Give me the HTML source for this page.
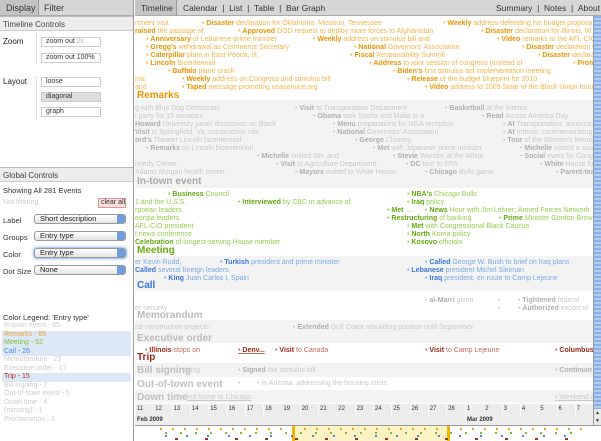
<!DOCTYPE html>
<html><head><meta charset="utf-8"><style>
*{margin:0;padding:0;box-sizing:border-box}
body{width:601px;height:441px;overflow:hidden;background:#fff;font-family:"Liberation Sans",sans-serif;position:relative}
.a{position:absolute;white-space:nowrap}
#left{position:absolute;left:0;top:0;width:134px;height:441px;background:#fff;border-right:1px solid #999}
.tabs{position:absolute;left:0;top:0;height:16px;width:100%;background:#d6d6d6;border-bottom:1px solid #aaa;font-size:9px;color:#333}
.hdr{position:absolute;left:0;width:133px;height:15px;background:#ececec;border-top:1px solid #bbb;border-bottom:1px solid #ccc;font-size:8px;color:#444;padding:3px 0 0 3px}
.btn{position:absolute;left:41px;width:60px;height:10px;border:1px solid #ccc;background:#fff;font-size:7px;color:#333;padding:0 0 0 4px;line-height:8px}
.sel{position:absolute;left:34px;width:92px;height:10px;border:1px solid #999;border-radius:3px;background:linear-gradient(#fff,#e4e4e4);font-size:7.5px;color:#222;padding-left:5px;line-height:8px}
.sel:after{content:"";position:absolute;right:0;top:0;width:8px;height:8px;background:#6f9ee0;border-radius:0 2px 2px 0}
.lg{position:absolute;left:2px;width:129px;height:8.5px;font-size:7px;color:#ccc;padding-left:2px;line-height:8.5px}
#main{position:absolute;left:135px;top:16px;width:458px;height:409px;overflow:hidden;font-size:7px;line-height:8px}
.band{position:absolute;left:0;width:458px}
.e{position:absolute;white-space:nowrap}
.o{color:#f3b44a}.o b{color:#ec9400}
.g{color:#c9c9c9}.g b{color:#b0b0b0}
.m{color:#94cc4f}.m b{color:#62a810}
.c{color:#7aaae6}.c b{color:#3a78d8}
.r{color:#c46a5e}.r b{color:#9a2818}
.l{position:absolute;left:2px;font-weight:bold;font-size:10px;line-height:11px}
.ax{position:absolute;top:388px;height:12px;width:17.5px;background:#ececec;font-size:6px;color:#333;padding:2px 0 0 1px;line-height:7px}
</style></head><body>
<div id="left">
 <div class="tabs"><span class="a" style="left:0;top:0;width:39px;height:15px;background:#c4c4c4;border-right:1px solid #999;padding:3px 0 0 6px">Display</span><span class="a" style="left:44px;top:3px">Filter</span></div>
 <div class="hdr" style="top:16px">Timeline Controls</div>
 <div class="a" style="left:3px;top:37px;font-size:8px;color:#222">Zoom</div>
 <div class="a" style="left:36px;top:35px;height:28px;border-left:1px dotted #bbb"></div>
 <div class="btn" style="top:37px">zoom out <span style="color:#aaa;font-size:6px">2X</span></div>
 <div class="btn" style="top:53px">zoom out 100%</div>
 <div class="a" style="left:3px;top:77px;font-size:8px;color:#222">Layout</div>
 <div class="a" style="left:36px;top:76px;height:43px;border-left:1px dotted #bbb"></div>
 <div class="btn" style="top:77px">loose</div>
 <div class="btn" style="top:92px;background:#ddd">diagonal</div>
 <div class="btn" style="top:107px">graph</div>
 <div class="hdr" style="top:167px">Global Controls</div>
 <div class="a" style="left:3px;top:186px;font-size:7.5px;color:#333">Showing All 281 Events</div>
 <div class="a" style="left:3px;top:199px;font-size:7px;color:#ccc">Not filtering</div>
 <div class="a" style="left:98px;top:198px;width:28px;height:10px;background:#f4dede;border:1px solid #d99;font-size:7px;color:#333;padding-left:2px;line-height:8px">clear all</div>
 <div class="a" style="left:3px;top:216px;font-size:7.5px;color:#333">Label</div><div class="sel" style="top:214px">Short description</div>
 <div class="a" style="left:3px;top:233px;font-size:7.5px;color:#333">Groups</div><div class="sel" style="top:231px">Entry type</div>
 <div class="a" style="left:3px;top:250px;font-size:7.5px;color:#333">Color</div><div class="sel" style="top:248px;box-shadow:0 0 2px 1px #8ab4f0">Entry type</div>
 <div class="a" style="left:3px;top:267px;font-size:7.5px;color:#333">Dot Size</div><div class="sel" style="top:265px">None</div>
 <div class="a" style="left:3px;top:313px;font-size:7.5px;color:#333">Color Legend: 'Entry type'</div>
 <div class="lg" style="top:322px">In-town event - 65</div>
 <div class="lg" style="top:330.5px;background:#dde8f7;color:#f0a030">Remarks - 65</div>
 <div class="lg" style="top:339px;background:#dde8f7;color:#7cc030">Meeting - 52</div>
 <div class="lg" style="top:347.5px;background:#dde8f7;color:#4a88e0">Call - 26</div>
 <div class="lg" style="top:356px">Memorandum - 23</div>
 <div class="lg" style="top:364.5px">Executive order - 17</div>
 <div class="lg" style="top:373px;background:#dde8f7;color:#a03020">Trip - 15</div>
 <div class="lg" style="top:381.5px">Bill signing - 7</div>
 <div class="lg" style="top:390px">Out-of-town event - 5</div>
 <div class="lg" style="top:398.5px">Down time - 4</div>
 <div class="lg" style="top:407px">(missing) - 1</div>
 <div class="lg" style="top:415.5px">Proclamation - 1</div>
</div>
<div class="a" style="left:135px;top:0;width:466px;height:16px;background:#d6d6d6;border-bottom:1px solid #aaa;font-size:8.5px;color:#333">
 <span class="a" style="left:0;top:0;width:42px;height:15px;background:#c4c4c4;border-right:1px solid #999;padding:3px 0 0 6px">Timeline</span>
 <span class="a" style="left:48px;top:3px">Calendar &nbsp;| &nbsp;List &nbsp;| &nbsp;Table &nbsp;| &nbsp;Bar Graph</span>
 <span class="a" style="left:361px;top:3px">Summary &nbsp;| &nbsp;Notes &nbsp;| &nbsp;About</span>
</div>
<div id="main">
 <div class="band" style="top:84px;height:88px;background:#f3f3f3"></div>
 <div class="band" style="top:240px;height:35px;background:#f3f3f3"></div>
 <div class="band" style="top:304px;height:23px;background:#f3f3f3"></div>
 <div class="band" style="top:347px;height:14px;background:#f3f3f3"></div>
 <div class="band" style="top:374px;height:14px;background:#f3f3f3"></div>
 <!-- remarks -->
 <div class="o">
 <span class="e" style="left:0;top:4px">rtment visit</span><span class="e" style="left:67px;top:4px">• <b>Disaster</b> declaration for Oklahoma, Missouri, Tennessee</span><span class="e" style="left:308px;top:4px">• <b>Weekly</b> address defending his budget proposal</span>
 <span class="e" style="left:0;top:12px"><b>raised</b> the passage of</span><span class="e" style="left:103px;top:12px">• <b>Approved</b> DOD request to deploy more forces to Afghanistan</span><span class="e" style="left:346px;top:12px">• <b>Disaster</b> declaration for Illinois, W</span>
 <span class="e" style="left:11px;top:20px">• <b>Anniversary</b> of Lebanese prime minister</span><span class="e" style="left:178px;top:20px">• <b>Weekly</b> address on stimulus bill and</span><span class="e" style="left:362px;top:20px">• <b>Video</b> remarks to the AFL-CIO</span>
 <span class="e" style="left:11px;top:28px">• <b>Gregg's</b> withdrawal as Commerce Secretary</span><span class="e" style="left:219px;top:28px">• <b>National</b> Governors' Association</span><span class="e" style="left:387px;top:28px">• <b>Disaster</b> declaration fo</span>
 <span class="e" style="left:11px;top:36px">• <b>Caterpillar</b> plant in East Peoria, Ill.</span><span class="e" style="left:215px;top:36px">• <b>Fiscal</b> Responsibility Summit</span><span class="e" style="left:403px;top:36px">• <b>Disaster</b> declara</span>
 <span class="e" style="left:11px;top:44px">• <b>Lincoln</b> Bicentennial</span><span class="e" style="left:234px;top:44px">• <b>Address</b> to joint session of congress (instead of</span><span class="e" style="left:438px;top:44px">• <b>Prom</b></span>
 <span class="e" style="left:33px;top:52px">• <b>Buffalo</b> plane crash</span><span class="e" style="left:258px;top:52px">• <b>Biden's</b> first stimulus act implementation meeting</span>
 <span class="e" style="left:0;top:60px">mic</span><span class="e" style="left:47px;top:60px">• <b>Weekly</b> address on Congress and stimulus bill</span><span class="e" style="left:272px;top:60px">• <b>Release</b> of the budget blueprint for 2010</span>
 <span class="e" style="left:0;top:68px">and</span><span class="e" style="left:47px;top:68px">• <b>Taped</b> message promoting usaservice.org</span><span class="e" style="left:290px;top:68px">• <b>Video</b> address to 2009 State of the Black Union forum</span>
 </div>
 <div class="l" style="top:74px;color:#ec9400">Remarks</div>
 <!-- in-town -->
 <div class="g">
 <span class="e" style="left:0;top:89px">g with Blue Dog Democrats</span><span class="e" style="left:160px;top:89px">• <b>Visit</b> to Transportation Department</span><span class="e" style="left:310px;top:89px">• <b>Basketball</b> at the Interior</span>
 <span class="e" style="left:0;top:97px">l party for 15 senators</span><span class="e" style="left:178px;top:97px">• <b>Obama</b> took Sasha and Malia to a</span><span class="e" style="left:347px;top:97px">• <b>Read</b> Across America Day</span>
 <span class="e" style="left:0;top:105px"><b>Howard</b> University panel discussion on Black</span><span class="e" style="left:198px;top:105px">• <b>Menu</b> preparations for NGA reception</span><span class="e" style="left:368px;top:105px">• <b>At</b> Transportation, announce</span>
 <span class="e" style="left:0;top:113px"><b>Visit</b> to Springfield, Va. construction site</span><span class="e" style="left:198px;top:113px">• <b>National</b> Governors' Association</span><span class="e" style="left:368px;top:113px">• <b>At</b> Interior, commemorating</span>
 <span class="e" style="left:0;top:121px"><b>ord's</b> Theater Lincoln bicentennial</span><span class="e" style="left:220px;top:121px">• <b>George</b> Clooney</span><span class="e" style="left:368px;top:121px">• <b>Tour</b> of the Women's Memor</span>
 <span class="e" style="left:11px;top:129px">• <b>Remarks</b> on Lincoln bicentennial</span><span class="e" style="left:238px;top:129px">• <b>Met</b> with Japanese prime minister</span><span class="e" style="left:385px;top:129px">• <b>Michelle</b> visited a sou</span>
 <span class="e" style="left:122px;top:137px">• <b>Michelle</b> invited 6th- and</span><span class="e" style="left:258px;top:137px">• <b>Stevie</b> Wonder at the White</span><span class="e" style="left:385px;top:137px">• <b>Social</b> event for Congr</span>
 <span class="e" style="left:0;top:145px">nnedy Center</span><span class="e" style="left:141px;top:145px">• <b>Visit</b> to Agriculture Department</span><span class="e" style="left:271px;top:145px">• <b>DC</b> tour to EPA</span><span class="e" style="left:405px;top:145px">• <b>White</b> House for</span>
 <span class="e" style="left:0;top:153px">Adams Morgan health center</span><span class="e" style="left:160px;top:153px">• <b>Mayors</b> invited to White House</span><span class="e" style="left:290px;top:153px">• <b>Chicago</b> Bulls game</span><span class="e" style="left:421px;top:153px">• <b>Parent-tea</b></span>
 </div>
 <div class="l" style="top:160px;color:#aaa">In-town event</div>
 <!-- meeting -->
 <div class="m">
 <span class="e" style="left:33px;top:175px">• <b>Business</b> Council</span><span class="e" style="left:272px;top:175px">• <b>NBA's</b> Chicago Bulls</span>
 <span class="e" style="left:0;top:183px">1 and the U.S.S.</span><span class="e" style="left:103px;top:183px">• <b>Interviewed</b> by CBC in advance of</span><span class="e" style="left:272px;top:183px">• <b>Iraq</b> policy</span>
 <span class="e" style="left:0;top:191px">rpoean leaders</span><span class="e" style="left:252px;top:191px">• <b>Met</b> ...</span><span class="e" style="left:290px;top:191px">• <b>News</b> Hour with Jim Lehrer; Armed Forces Network</span>
 <span class="e" style="left:0;top:199px">eorgia leaders</span><span class="e" style="left:252px;top:199px">• <b>Restructuring</b> of banking</span><span class="e" style="left:364px;top:199px">• <b>Prime</b> Minister Gordon Brown</span>
 <span class="e" style="left:0;top:207px">AFL-CIO president</span><span class="e" style="left:272px;top:207px">• <b>Met</b> with Congressional Black Caucus</span>
 <span class="e" style="left:0;top:215px">t news conference</span><span class="e" style="left:272px;top:215px">• <b>North</b> Korea policy</span>
 <span class="e" style="left:0;top:223px"><b>Celebration</b> of longest-serving House member</span><span class="e" style="left:272px;top:223px">• <b>Kosovo</b> officials</span>
 </div>
 <div class="l" style="top:229px;color:#66aa11">Meeting</div>
 <!-- call -->
 <div class="c">
 <span class="e" style="left:0;top:243px">er Kevin Rudd,</span><span class="e" style="left:85px;top:243px">• <b>Turkish</b> president and prime minister</span><span class="e" style="left:290px;top:243px">• <b>Called</b> George W. Bush to brief on Iraq plans</span>
 <span class="e" style="left:0;top:251px"><b>Called</b> several foreign leaders</span><span class="e" style="left:272px;top:251px">• <b>Lebanese</b> president Michel Sleiman</span>
 <span class="e" style="left:29px;top:259px">• <b>King</b> Juan Carlos I, Spain</span><span class="e" style="left:290px;top:259px">• <b>Iraq</b> president, en route to Camp Lejeune</span>
 </div>
 <div class="l" style="top:264px;color:#3377dd">Call</div>
 <div class="g">
 <span class="e" style="left:290px;top:281px">• <b>al-Marri</b> given</span><span class="e" style="left:363px;top:281px">•</span><span class="e" style="left:383px;top:281px">• <b>Tightened</b> federal</span>
 <span class="e" style="left:0;top:289px">er security</span><span class="e" style="left:363px;top:289px">•</span><span class="e" style="left:383px;top:289px">• <b>Authorized</b> export of</span>
 <span class="e" style="left:0;top:308px">ral construction projects</span><span class="e" style="left:158px;top:308px">• <b>Extended</b> Gulf Coast rebuilding position until September</span>
 </div>
 <div class="l" style="top:294px;color:#bbb">Memorandum</div>
 <div class="l" style="top:317px;color:#bbb">Executive order</div>
 <div class="r">
 <span class="e" style="left:10px;top:331px">• <b>Illinois</b> stops on</span><span class="e" style="left:103px;top:331px;text-decoration:underline">• <b>Denv...</b></span><span class="e" style="left:140px;top:331px">• <b>Visit</b> to Canada</span><span class="e" style="left:290px;top:331px">• <b>Visit</b> to Camp Lejeune</span><span class="e" style="left:420px;top:331px">• <b>Columbus</b></span>
 </div>
 <div class="l" style="top:336px;color:#9a2818">Trip</div>
 <div class="l" style="top:349px;color:#c0c0c0">Bill signing</div>
 <div class="g"><span class="e" style="left:48px;top:351px">oning</span><span class="e" style="left:103px;top:351px">• <b>Signed</b> the stimulus bill</span><span class="e" style="left:420px;top:351px">• <b>Continuin</b></span>
 <span class="e" style="left:103px;top:364px">•</span><span class="e" style="left:122px;top:364px">• In Arizona, addressing the housing crisis</span>
 <span class="e" style="left:52px;top:378px;text-decoration:underline">led home to Chicago</span><span class="e" style="left:420px;top:378px;text-decoration:underline">• Weekend a</span></div>
 <div class="l" style="top:363px;color:#c0c0c0">Out-of-town event</div>
 <div class="l" style="top:376px;color:#c0c0c0">Down time</div>
 <div class="band" style="top:386px;height:23px;background:#fafafa"></div>
 <div class="ax" style="left:1px">11</div><div class="ax" style="left:19.3px">12</div><div class="ax" style="left:37.6px">13</div><div class="ax" style="left:55.9px">14</div><div class="ax" style="left:74.2px">15</div><div class="ax" style="left:92.5px">16</div><div class="ax" style="left:110.8px">17</div><div class="ax" style="left:129.1px">18</div><div class="ax" style="left:147.4px">19</div><div class="ax" style="left:165.7px">20</div><div class="ax" style="left:184px">21</div><div class="ax" style="left:202.3px">22</div><div class="ax" style="left:220.6px">23</div><div class="ax" style="left:238.9px">24</div><div class="ax" style="left:257.2px">25</div><div class="ax" style="left:275.5px">26</div><div class="ax" style="left:293.8px">27</div><div class="ax" style="left:312.1px">28</div><div class="ax" style="left:331px">1</div><div class="ax" style="left:349.3px">2</div><div class="ax" style="left:367.6px">3</div><div class="ax" style="left:385.9px">4</div><div class="ax" style="left:404.2px">5</div><div class="ax" style="left:422.5px">6</div><div class="ax" style="left:440.8px">7</div>
 <div class="band" style="top:400px;height:9px;background:#eee"></div>
 <span class="e" style="left:2px;top:400px;font-size:6px;font-weight:bold;color:#333">Feb 2009</span>
 <span class="e" style="left:332px;top:400px;font-size:6px;font-weight:bold;color:#333">Mar 2009</span>
</div>
<div class="a" style="left:593px;top:16px;width:8px;height:393px;background:repeating-linear-gradient(#8ab0e8 0 2px,#b4ccf0 2px 4px);border-left:1px solid #999"></div>
<div class="a" style="left:593px;top:409px;width:8px;height:16px;background:#e8e8e8;border-left:1px solid #999;font-size:5px;text-align:center;line-height:8px;color:#333">▲<br>▼</div>
<div class="a" style="left:135px;top:425px;width:466px;height:16px;background:#fff;border-top:1px solid #999;overflow:hidden">
 <div class="a" style="left:157px;top:0;width:158px;height:16px;background:#fcf2c4;border-left:3px solid #f0b800;border-right:3px solid #f0b800"></div>
 <div class="a" style="left:25px;top:2px;width:430px;height:2px;background:repeating-linear-gradient(90deg,#f0a020 0 2px,transparent 2px 12px)"></div>
 <div class="a" style="left:30px;top:6px;width:420px;height:2px;background:repeating-linear-gradient(90deg,#7cc030 0 2px,transparent 2px 15px)"></div>
 <div class="a" style="left:30px;top:9px;width:420px;height:2px;background:repeating-linear-gradient(90deg,#4a88e0 0 2px,transparent 2px 21px)"></div>
 <div class="a" style="left:40px;top:12px;width:420px;height:2px;background:repeating-linear-gradient(90deg,#a03020 0 3px,transparent 3px 30px)"></div>
</div>
</body></html>
